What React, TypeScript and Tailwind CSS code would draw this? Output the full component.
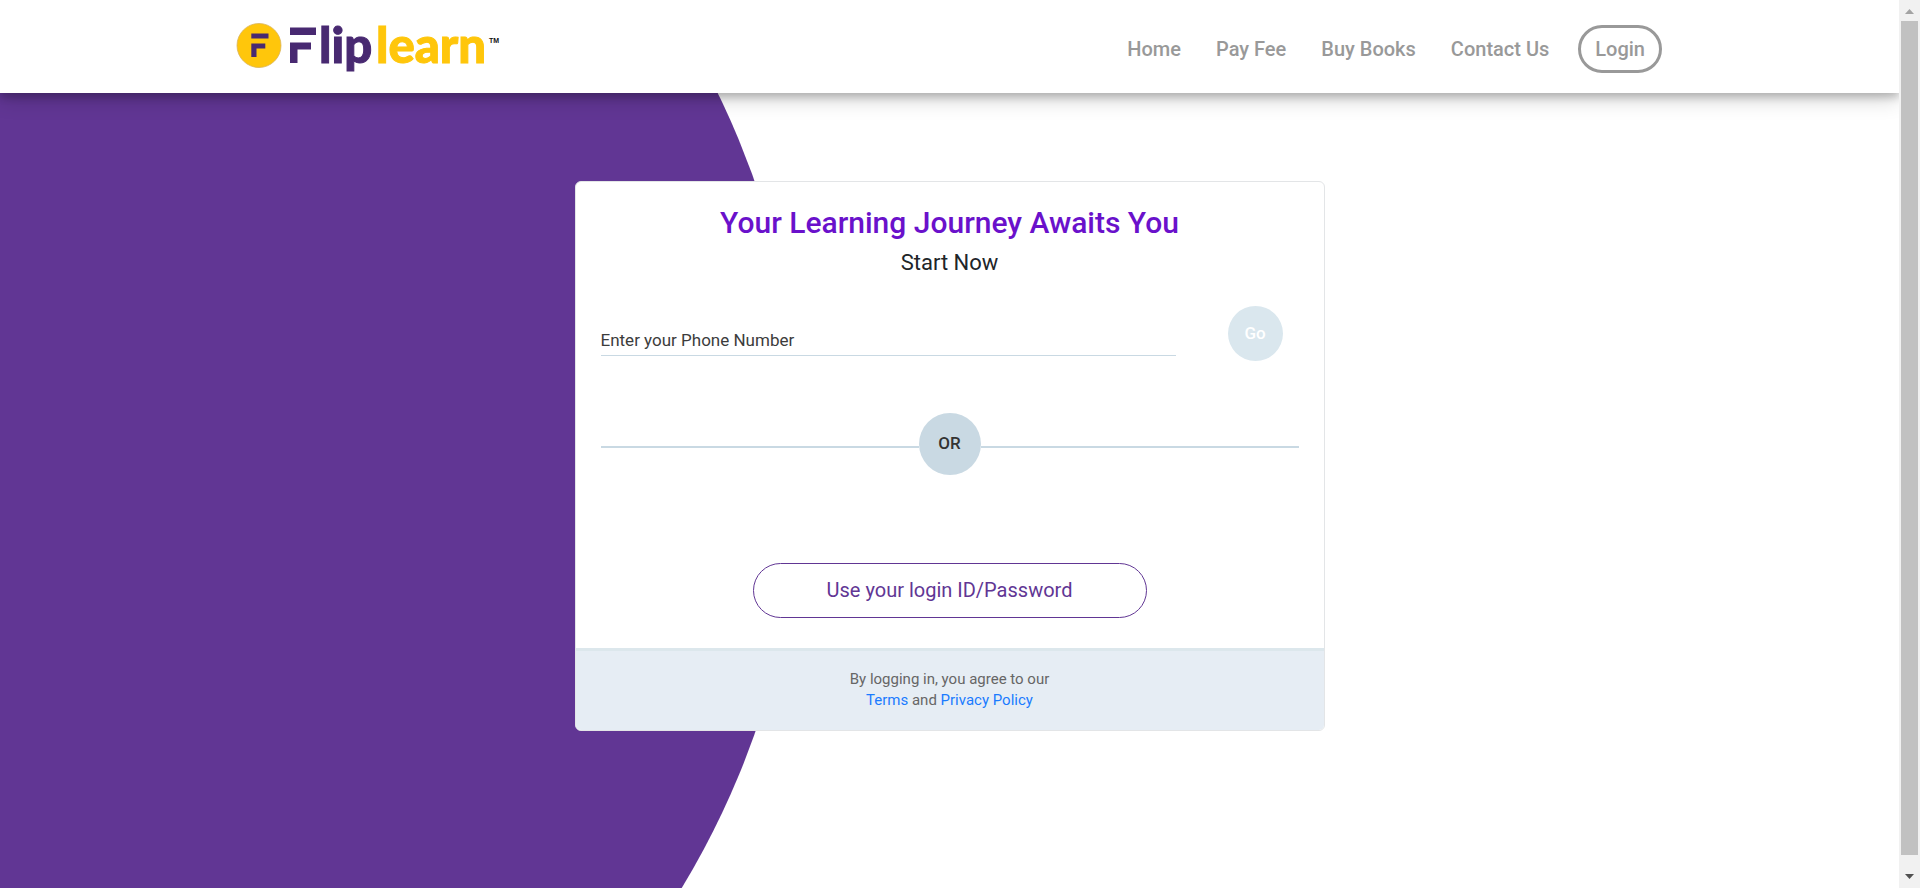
const links = ['Home', 'Pay Fee', 'Buy Books', 'Contact Us'];

function Logo() {
  return (
    <a href="#" aria-label="Fliplearn" className="block">
      <svg width="266" height="65" viewBox="0 0 266 65" className="block overflow-visible">
        <circle cx="22" cy="31.5" r="22" fill="#ffc60b" stroke="#d9b45a" strokeWidth="0.8" />
        <path d="M14.300 19.500h17.200v5H14.300zM14.300 29.500h14v5h-8.800v8.500h-5.200z" fill="#482971" />
        <path d="M53 13.500h26v7.500H53zM53 28.500h21v7H60.500V49H53z" fill="#482971" />
        <g fontSize="49" fontWeight="900" fontFamily="Lato, sans-serif" strokeWidth="1">
          <text x="82" y="49" fill="#482971" stroke="#482971">lip</text>
          <text x="139" y="49" fill="#ffc60b" stroke="#ffc60b">learn</text>
        </g>
        <text x="252" y="29" fontSize="7" fontWeight="700" fill="#111" fontFamily="'Liberation Sans', sans-serif">TM</text>
      </svg>
    </a>
  );
}

function Header() {
  return (
    <header className="relative z-10 flex h-[93px] items-center justify-between bg-white px-[237px] shadow-[0_4px_8px_rgba(0,0,0,0.2),0_6px_20px_rgba(0,0,0,0.19)]">
      <Logo />
      <nav className="flex items-center gap-[35px] pt-1 text-[20px] leading-6 font-medium text-[#999]">
        {links.map((label) => (
          <a key={label} href="#">{label}</a>
        ))}
        <a href="#" className="-ml-1.5 rounded-3xl border-3 border-[#999] px-3.5 py-[9px]">Login</a>
      </nav>
    </header>
  );
}

function LoginCard() {
  return (
    <section className="relative flex w-[750px] flex-col overflow-hidden rounded-md border border-[#e3e5e7] bg-white">
      <div className="px-[25px] pt-5 pb-[30px]">
        <h1 className="text-center text-[30px] leading-[42px] font-medium text-[#6a11cb]">Your Learning Journey Awaits You</h1>
        <p className="pt-[3px] text-center text-[22px] leading-8 text-[#212529]">Start Now</p>
        <form className="flex items-start justify-between pt-[27px] pr-4">
          <input
            type="tel"
            aria-label="Enter your Phone Number"
            placeholder="Enter your Phone Number"
            className="mt-4 h-[34px] w-[575px] border-b border-[#c9d9e3] pt-0.5 text-[17px] outline-none placeholder:text-[#3c3c3c]"
          />
          <button type="button" className="size-[55px] rounded-full bg-[#dae7ee] text-[17px] font-medium text-white">Go</button>
        </form>
        <div className="flex items-center pt-[52px]">
          <span className="mt-1.5 h-0.5 flex-1 bg-[#c9d9e3]" />
          <span className="flex size-[62px] items-center justify-center rounded-full bg-[#c9d9e3] text-[17px] font-medium text-[#333]">OR</span>
          <span className="mt-1.5 h-0.5 flex-1 bg-[#c9d9e3]" />
        </div>
        <div className="flex justify-center pt-[88px]">
          <button type="button" className="h-[55px] w-[394px] rounded-full border border-[#613694] pb-0.5 text-[20px] text-[#613694]">
            Use your login ID/Password
          </button>
        </div>
      </div>
      <footer className="border-t-3 border-[#dce7ec] bg-[#e6edf4] pt-[18px] pb-[19px] text-center text-[15px] leading-[21px] text-[#666]">
        By logging in, you agree to our
        <br />
        <a href="#" className="text-[#1a7bff]">Terms</a> and <a href="#" className="text-[#1a7bff]">Privacy Policy</a>
      </footer>
    </section>
  );
}

function ScrollTrack() {
  return (
    <div aria-hidden="true" className="flex w-[21px] flex-col items-center bg-[#f1f1f1]">
      <svg width="9" height="21" viewBox="0 0 9 21"><path d="M0 14L4.500 9L9 14z" fill="#a3a3a3" /></svg>
      <div className="w-[17px] flex-1 bg-[#c1c1c1]" />
      <svg width="9" height="33" viewBox="0 0 9 33"><path d="M0 19L4.500 24L9 19z" fill="#505050" /></svg>
    </div>
  );
}

export default function App() {
  return (
    <div className="flex min-h-screen bg-white font-[Roboto,sans-serif]">
      <div className="relative min-w-0 flex-1 overflow-hidden">
        <div className="absolute top-[-373px] left-[-859px] size-[1661px] rounded-full bg-[#613694]" />
        <Header />
        <main className="flex justify-center pt-22">
          <LoginCard />
        </main>
      </div>
      <ScrollTrack />
    </div>
  );
}
